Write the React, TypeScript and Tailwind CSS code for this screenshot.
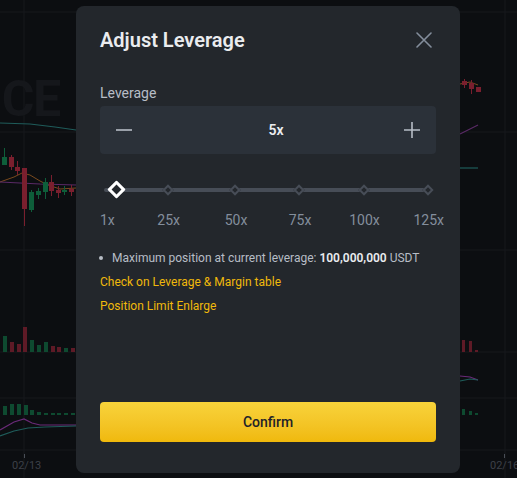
import React from "react";

function ChartBg() {
  const grid = "#16191d";
  return (
    <svg className="absolute inset-0" width="517" height="478" viewBox="0 0 517 478">
      {[24, 505].map((x) => (
        <line key={"v" + x} x1={x} y1={0} x2={x} y2={478} stroke={grid} strokeWidth={1} />
      ))}
      {[12, 132, 250, 352, 398, 450].map((y) => (
        <line key={"h" + y} x1={0} y1={y} x2={517} y2={y} stroke={grid} strokeWidth={1} />
      ))}
      <path d="M0 123 L30 124 L55 127 L76 130" stroke="#1f5c5a" strokeWidth={1.2} fill="none" />
      <path d="M0 182 L14 177 L22 173 L30 175 L40 181 L48 185 L60 189 L76 188" stroke="#7a4a1e" strokeWidth={1} fill="none" />
      <path d="M0 182 L20 183 L40 184 L76 185" stroke="#5a2a66" strokeWidth={1.2} fill="none" />
      <g>
        <line x1={4.5} y1={148} x2={4.5} y2={165} stroke="#0e5e3a" />
        <rect x={2} y={157} width={5} height={8} fill="#0e5e3a" />
        <line x1={11.5} y1={155} x2={11.5} y2={170} stroke="#7a1f2e" />
        <rect x={9} y={157} width={5} height={10} fill="#7a1f2e" />
        <line x1={17.5} y1={161} x2={17.5} y2={175} stroke="#7a1f2e" />
        <rect x={15} y={167} width={5} height={4} fill="#7a1f2e" />
        <line x1={24.5} y1={168} x2={24.5} y2={226} stroke="#7a1f2e" />
        <rect x={22} y={168} width={5} height={41} fill="#7a1f2e" />
        <line x1={31.5} y1={190} x2={31.5} y2={212} stroke="#0e5e3a" />
        <rect x={29} y={192} width={5} height={18} fill="#0e5e3a" />
        <line x1={38.5} y1={188} x2={38.5} y2={199} stroke="#0e5e3a" />
        <rect x={36} y={191} width={5} height={4} fill="#0e5e3a" />
        <line x1={45.5} y1={178} x2={45.5} y2={199} stroke="#0e5e3a" />
        <rect x={43} y={182} width={5} height={10} fill="#0e5e3a" />
        <line x1={51.5} y1={175} x2={51.5} y2={196} stroke="#7a1f2e" />
        <rect x={49} y={182} width={5} height={9} fill="#7a1f2e" />
        <line x1={58.5} y1={186} x2={58.5} y2={198} stroke="#7a1f2e" />
        <rect x={56} y={190} width={5} height={3} fill="#7a1f2e" />
        <line x1={64.5} y1={186} x2={64.5} y2={195} stroke="#0e5e3a" />
        <rect x={62} y={190} width={5} height={2} fill="#0e5e3a" />
        <line x1={71.5} y1={185} x2={71.5} y2={196} stroke="#7a1f2e" />
        <rect x={69} y={189} width={5} height={3} fill="#7a1f2e" />
      </g>
      <g>
        <path d="M460 84 L470 82 L478 85" stroke="#7a4a1e" fill="none" />
        <line x1={464.5} y1={79} x2={464.5} y2={88} stroke="#7a1f2e" />
        <rect x={462} y={81} width={5} height={4} fill="#7a1f2e" />
        <line x1={471.5} y1={80} x2={471.5} y2={94} stroke="#7a1f2e" />
        <rect x={469} y={83} width={5} height={6} fill="#7a1f2e" />
        <rect x={476} y={87} width={5} height={5} fill="#7a1f2e" />
        <path d="M460 134 L478 125" stroke="#5a2a66" strokeWidth={1.2} />
        <path d="M460 168 L478 168" stroke="#1f5c5a" strokeWidth={1.2} />
      </g>
      {[
        [3, 336, "#0e4a30"],
        [10, 342, "#5e1a26"],
        [17, 344, "#5e1a26"],
        [23, 327, "#5e1a26"],
        [30, 340, "#0e4a30"],
        [37, 345, "#0e4a30"],
        [44, 342, "#0e4a30"],
        [51, 346, "#5e1a26"],
        [57, 347, "#5e1a26"],
        [64, 348, "#0e4a30"],
        [71, 348, "#5e1a26"],
      ].map(([x, y, c]) => (
        <rect key={"vol" + x} x={x as number} y={y as number} width={4} height={352 - (y as number)} fill={c as string} />
      ))}
      {[
        [462, 340],
        [469, 341],
        [475, 350],
      ].map(([x, y]) => (
        <rect key={"vr" + x} x={x} y={y} width={3} height={352 - y} fill="#5e1a26" />
      ))}
      {[
        [3, 406],
        [10, 404],
        [17, 404],
        [24, 405],
        [30, 410],
        [37, 412],
        [44, 413],
        [51, 413],
        [57, 413],
        [64, 413],
        [71, 413],
      ].map(([x, y]) => (
        <rect key={"ind" + x} x={x} y={y} width={4} height={415 - y} fill="#0e4a30" />
      ))}
      {[
        [462, 409],
        [469, 411],
        [475, 413],
      ].map(([x, y]) => (
        <rect key={"indr" + x} x={x} y={y} width={3} height={415 - y} fill="#0e4a30" />
      ))}
      <path d="M0 430 L14 422 L24 419 L32 423 L40 425 L76 425" stroke="#6a2a78" strokeWidth={1.2} fill="none" />
      <path d="M0 436 L14 431 L28 428 L45 427 L76 426" stroke="#1f5c5a" strokeWidth={1.2} fill="none" />
      <path d="M460 376 L470 377 L478 380" stroke="#6a2a78" strokeWidth={1.2} fill="none" />
      <path d="M460 381 L470 379 L478 380" stroke="#1f5c5a" strokeWidth={1.2} fill="none" />
      <line x1={24.5} y1={454} x2={24.5} y2={458} stroke="#4a4f57" />
      <line x1={504.5} y1={454} x2={504.5} y2={458} stroke="#4a4f57" />
    </svg>
  );
}

const marks = [
  { label: "1x", pos: 6.4, show: false },
  { label: "25x", pos: 67.7, show: true },
  { label: "50x", pos: 135, show: true },
  { label: "75x", pos: 199, show: true },
  { label: "100x", pos: 263.5, show: true },
  { label: "125x", pos: 327.7, show: true },
];

export default function App() {
  return (
    <div
      className="relative w-[517px] h-[478px] overflow-hidden bg-[#0c0e11]"
      style={{ fontFamily: "Roboto, 'Liberation Sans', sans-serif" }}
    >
      <ChartBg />
      <div className="absolute left-[-10px] top-[74px] w-[70px] overflow-hidden flex justify-end">
        <span className="text-[50px] font-bold leading-none text-[#15171b] tracking-tight whitespace-nowrap">CE</span>
      </div>
      <span className="absolute left-[12px] top-[458px] text-[11px] text-[#3c4048]">02/13</span>
      <span className="absolute left-[490px] top-[458px] text-[11px] text-[#3c4048]">02/16</span>

      <div className="absolute left-[76px] top-[6px] w-[384px] h-[467px] rounded-[8px] bg-[#23272c] px-[24px] pt-[20px] flex flex-col">
        <div className="flex items-center justify-between h-[28px]">
          <h2 className="text-[20px] font-semibold text-[#eaecef] leading-none">Adjust Leverage</h2>
          <svg width="16" height="16" viewBox="0 0 16 16" className="mr-[4px]">
            <path d="M1 1 L15 15 M15 1 L1 15" stroke="#848e9c" strokeWidth="1.6" strokeLinecap="round" />
          </svg>
        </div>
        <div className="mt-[29px] text-[14px] text-[#b7bdc6] leading-[20px]">Leverage</div>
        <div className="mt-[3px] h-[48px] rounded-[4px] bg-[#2b3139] flex items-center justify-between px-[16px]">
          <svg width="16" height="16" viewBox="0 0 16 16">
            <path d="M0 8 H16" stroke="#b7bdc6" strokeWidth="1.6" />
          </svg>
          <span className="text-[14px] font-semibold text-[#eaecef] pl-[16px]">5x</span>
          <svg width="16" height="16" viewBox="0 0 16 16">
            <path d="M0 8 H16 M8 0 V16" stroke="#b7bdc6" strokeWidth="1.6" />
          </svg>
        </div>

        <div className="relative mt-[12px] h-[60px]">
          <div className="absolute left-[3.7px] w-[324px] top-[22px] h-[4px] bg-[#474d57] rounded-full" />
          {marks
            .filter((m) => m.show)
            .map((m) => (
              <div
                key={m.label}
                className="absolute top-[20px] w-[8px] h-[8px] -ml-[4px] rotate-45 bg-[#23272c] border-[2px] border-[#474d57]"
                style={{ left: m.pos }}
              />
            ))}
          <div
            className="absolute top-[17px] w-[13px] h-[13px] -ml-[6.5px] rotate-45 bg-[#23272c] border-[3px] border-white rounded-[1px]"
            style={{ left: 16.5 }}
          />
          {marks.map((m) => (
            <span
              key={"l" + m.label}
              className="absolute top-[46px] -translate-x-1/2 text-[14px] leading-[16px] text-[#848e9c]"
              style={{ left: m.pos + 1 }}
            >
              {m.label}
            </span>
          ))}
        </div>

        <ul className="mt-[24px] text-[12px] leading-[16px] text-[#b7bdc6]">
          <li className="flex items-center whitespace-nowrap">
            <span className="w-[4px] h-[4px] rounded-full bg-[#b7bdc6] ml-[-1px] mr-[9px]" />
            <span>
              Maximum position at current leverage: <span className="font-semibold text-[#eaecef]">100,000,000</span> USDT
            </span>
          </li>
        </ul>
        <div className="mt-[8px] text-[12px] leading-[16px] text-[#f0b90b]">Check on Leverage &amp; Margin table</div>
        <div className="mt-[8px] text-[12px] leading-[16px] text-[#f0b90b]">Position Limit Enlarge</div>

        <button className="mt-[88px] h-[40px] w-full rounded-[4px] bg-gradient-to-b from-[#f8d33a] to-[#f0b90b] text-[14px] font-medium text-[#1e2329]">
          Confirm
        </button>
      </div>
    </div>
  );
}
